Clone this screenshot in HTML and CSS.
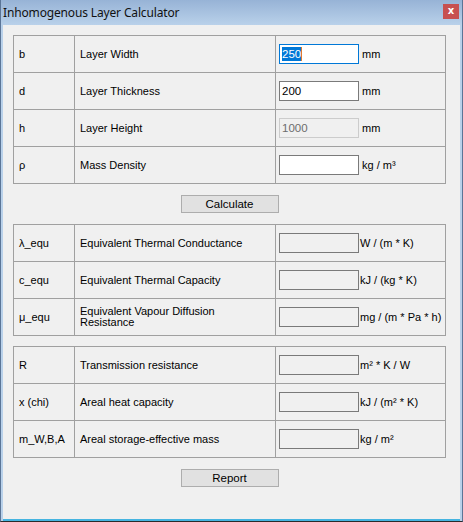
FILE: index.html
```html
<!DOCTYPE html>
<html>
<head>
<meta charset="utf-8">
<link rel="stylesheet" href="styles.css">
</head>
<body>
<div class="window">
  <div class="titlebar">
    <span class="title">Inhomogenous Layer Calculator</span>
    <span class="close">x</span>
  </div>
  <div class="client">
    <div class="grid">
      <div class="c sym">b</div><div class="c lbl">Layer Width</div>
      <div class="c val"><div class="tb focus"><span class="sel">250</span><span class="caret"></span></div><span class="unit">mm</span></div>
      <div class="c sym">d</div><div class="c lbl">Layer Thickness</div>
      <div class="c val"><div class="tb">200</div><span class="unit">mm</span></div>
      <div class="c sym">h</div><div class="c lbl">Layer Height</div>
      <div class="c val"><div class="tb disabled">1000</div><span class="unit">mm</span></div>
      <div class="c sym">ρ</div><div class="c lbl">Mass Density</div>
      <div class="c val"><div class="tb"></div><span class="unit">kg / m³</span></div>
    </div>
    <div class="btnrow"><div class="btn">Calculate</div></div>
    <div class="grid">
      <div class="c sym">λ_equ</div><div class="c lbl">Equivalent Thermal Conductance</div>
      <div class="c val"><div class="tb ro"></div><span class="unit tight">W / (m * K)</span></div>
      <div class="c sym">c_equ</div><div class="c lbl">Equivalent Thermal Capacity</div>
      <div class="c val"><div class="tb ro"></div><span class="unit tight">kJ / (kg * K)</span></div>
      <div class="c sym">μ_equ</div><div class="c lbl"><span class="wrap">Equivalent Vapour Diffusion Resistance</span></div>
      <div class="c val"><div class="tb ro"></div><span class="unit tight">mg / (m * Pa * h)</span></div>
    </div>
    <div class="grid second">
      <div class="c sym">R</div><div class="c lbl">Transmission resistance</div>
      <div class="c val"><div class="tb ro"></div><span class="unit tight">m² * K / W</span></div>
      <div class="c sym">x (chi)</div><div class="c lbl">Areal heat capacity</div>
      <div class="c val"><div class="tb ro"></div><span class="unit tight">kJ / (m² * K)</span></div>
      <div class="c sym">m_W,B,A</div><div class="c lbl">Areal storage-effective mass</div>
      <div class="c val"><div class="tb ro"></div><span class="unit tight">kg / m²</span></div>
    </div>
    <div class="btnrow"><div class="btn">Report</div></div>
  </div>
</div>
</body>
</html>
```
FILE: styles.css
```css
html, body {
  margin: 0;
  padding: 0;
  background: #2b2b2b;
}
.window {
  width: 463px;
  height: 522px;
  box-sizing: border-box;
  display: flex;
  flex-direction: column;
  background: linear-gradient(#97b3d6, #b9d1ea 25px, #b9d1ea);
  border-left: 1px solid #5b7597;
  border-right: 1px solid #5b7597;
  border-bottom: 1px solid #2b2b2b;
}
.titlebar {
  height: 25px;
  flex: none;
  display: flex;
  align-items: center;
  justify-content: space-between;
  padding: 0 3px 0 2px;
  font-family: "Noto Sans", "Open Sans", sans-serif;
  font-size: 12px;
  color: #111;
}
.title {
  letter-spacing: -0.15px;
}
.close {
  width: 16px;
  height: 15px;
  margin-top: -2px;
  background: #c75050;
  color: #fff;
  font-family: "DejaVu Sans", sans-serif;
  font-weight: bold;
  font-size: 10px;
  line-height: 14px;
  text-align: center;
}
.client {
  flex: 1;
  margin: 0 2px 2px 2px;
  background: #f0f0f0;
  padding: 10px 0 0 10px;
  box-shadow: 0 2px 0 #45b4e0;
  font-family: "Liberation Sans", Arial, sans-serif;
  font-size: 11px;
  color: #000;
}
.grid {
  display: grid;
  grid-template-columns: 60px 200px 169px;
  grid-auto-rows: 36px;
  gap: 1px;
  padding: 1px;
  background: #a0a0a0;
  width: max-content;
}
.grid.second {
  margin-top: 10px;
}
.c {
  background: #f0f0f0;
  display: flex;
  align-items: center;
  padding-left: 5px;
  white-space: nowrap;
}
.lbl .wrap {
  white-space: normal;
  width: 180px;
  line-height: 11px;
}
.val {
  padding-left: 3px;
}
.tb {
  width: 80px;
  height: 20px;
  box-sizing: border-box;
  border: 1px solid #7a7a7a;
  background: #fff;
  display: flex;
  align-items: center;
  padding-left: 2px;
  font-size: 11.5px;
}
.tb.focus {
  border-color: #0078d7;
}
.tb.disabled {
  border-color: #cccccc;
  background: #f0f0f0;
  color: #6d6d6d;
}
.tb.ro {
  background: #f0f0f0;
}
.sel {
  background: #0078d7;
  color: #fff;
  line-height: 14px;
}
.caret {
  width: 1px;
  height: 14px;
  background: #e07a2e;
}
.unit {
  margin-left: 3px;
}
.unit.tight {
  margin-left: 1px;
}
.btnrow {
  width: 433px;
  display: flex;
  justify-content: center;
  margin: 11px 0;
}
.btn {
  width: 98px;
  height: 18px;
  box-sizing: border-box;
  border: 1px solid #adadad;
  background: #e1e1e1;
  text-align: center;
  line-height: 16px;
  font-size: 11.5px;
}
```
